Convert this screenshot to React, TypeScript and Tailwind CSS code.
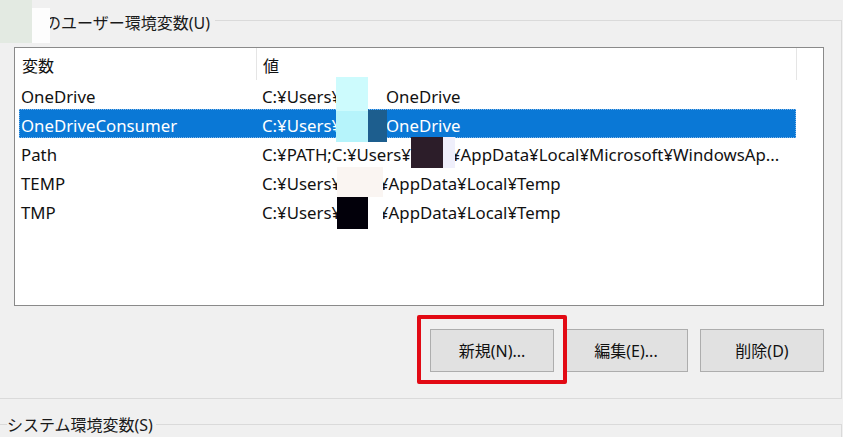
import React from "react";

const font = { fontFamily: '"Noto Sans", "Noto Sans CJK JP", sans-serif' };

type Row = { name: string; pre: string; preW: string; post: string; selected?: boolean };

const rows: Row[] = [
  { name: "OneDrive", pre: "C:¥Users¥", preW: "w-[124px]", post: "OneDrive" },
  { name: "OneDriveConsumer", pre: "C:¥Users¥", preW: "w-[124px]", post: "OneDrive", selected: true },
  { name: "Path", pre: "C:¥PATH;C:¥Users¥", preW: "w-[189px]", post: "¥AppData¥Local¥Microsoft¥WindowsAp..." },
  { name: "TEMP", pre: "C:¥Users¥", preW: "w-[117px]", post: "¥AppData¥Local¥Temp" },
  { name: "TMP", pre: "C:¥Users¥", preW: "w-[117px]", post: "¥AppData¥Local¥Temp" },
];

export default function App() {
  return (
    <div
      className="relative w-[843px] h-[437px] overflow-hidden bg-[#f0f0f0] text-[16px] text-[#111] flex flex-col"
      style={font}
    >
      {/* user group box */}
      <div className="shrink-0 mt-[20px] h-[379px] w-[842px] border-t border-r border-b border-[#dadada] flex flex-col">
        <div className="-mt-[8px] ml-[45px] w-fit pr-[5px] bg-[#f0f0f0] leading-[20px] text-[#1a1a1a]">
          のユーザー環境変数(U)
        </div>
        {/* list */}
        <div className="shrink-0 mt-[14px] ml-[14px] w-[810px] h-[259px] border border-[#8a8a8a] bg-white flex flex-col">
          <div className="flex h-[32px] items-center shrink-0">
            <div className="w-[242px] h-full pl-[7px] pt-[4px] flex items-center border-r border-[#e5e5e5]">変数</div>
            <div className="w-[540px] h-full pl-[6px] pt-[4px] flex items-center border-r border-[#e5e5e5]">値</div>
          </div>
          <div className="ml-[4px] w-[777px] flex flex-col text-[16.8px]">
            {rows.map((r) => (
              <div
                key={r.name}
                className={
                  "flex h-[29px] shrink-0 items-center pt-[4px] whitespace-nowrap " +
                  (r.selected ? "bg-[#0a78d6] text-white outline-1 outline-dotted outline-[#7fb4e6] -outline-offset-1" : "")
                }
              >
                <div className="w-[243px] pl-[2px]">{r.name}</div>
                <div className="flex">
                  <span className={r.preW + " inline-block"}>{r.pre}</span>
                  <span>{r.post}</span>
                </div>
              </div>
            ))}
          </div>
        </div>
        {/* buttons */}
        <div className="mt-[23px] ml-[430px] flex shrink-0">
          <button className="w-[124px] h-[43px] bg-[#e1e1e1] border border-[#adadad] text-[#111]">新規(N)...</button>
          <button className="ml-[10px] w-[124px] h-[43px] bg-[#e1e1e1] border border-[#adadad] text-[#111]">編集(E)...</button>
          <button className="ml-[12px] w-[124px] h-[43px] bg-[#e1e1e1] border border-[#adadad] text-[#111]">削除(D)</button>
        </div>
      </div>

      {/* system group box */}
      <div className="shrink-0 mt-[25px] h-[40px] w-[842px] border-t border-r border-[#dadada]">
        <div className="-mt-[10px] ml-[7px] w-fit pr-[3px] bg-[#f0f0f0] leading-[20px] text-[#1a1a1a]">
          システム環境変数(S)
        </div>
      </div>

      {/* highlight box */}
      <div className="absolute left-[417px] top-[315px] w-[150px] h-[69px] border-[4px] border-[#e20a14] rounded-[2px]" />

      {/* redaction blocks */}
      <div className="absolute left-0 top-0 w-[32px] h-[43px] bg-[#e3eae2]" />
      <div className="absolute left-[32px] top-[8px] w-[18px] h-[35px] bg-[#fdfdfd]" />
      <div className="absolute left-[336px] top-[77px] w-[32px] h-[34px] bg-[#cdfbfd]" />
      <div className="absolute left-[336px] top-[111px] w-[32px] h-[31px] bg-[#b6f4fb]" />
      <div className="absolute left-[368px] top-[110px] w-[19px] h-[32px] bg-[#1d5e8e]" />
      <div className="absolute left-[411px] top-[137px] w-[32px] h-[31px] bg-[#2c1d29]" />
      <div className="absolute left-[443px] top-[137px] w-[12px] h-[31px] bg-[#efeffb]" />
      <div className="absolute left-[337px] top-[167px] w-[46px] h-[30px] bg-[#faf5f2]" />
      <div className="absolute left-[337px] top-[197px] w-[31px] h-[32px] bg-[#02000a]" />
      <div className="absolute left-[368px] top-[197px] w-[15px] h-[30px] bg-white" />
    </div>
  );
}
